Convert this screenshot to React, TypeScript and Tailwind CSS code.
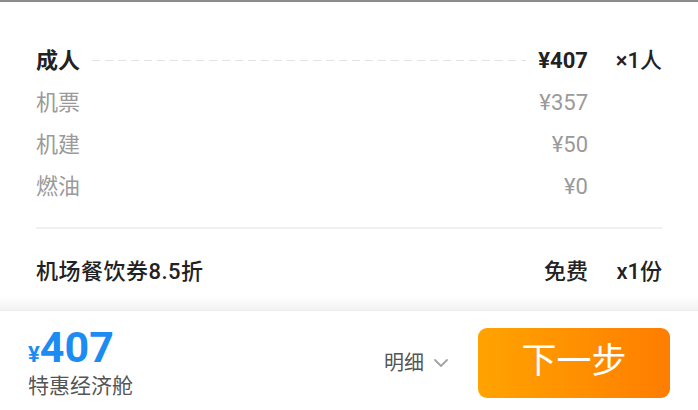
const font = { fontFamily: '"Roboto", "Noto Sans CJK SC", sans-serif' }

function FeeRow({ label, price }: { label: string; price: string }) {
  return (
    <div className="flex h-[42px] items-center text-[22px] text-[#9a9a9a]">
      <span>{label}</span>
      <div className="flex-1" />
      <span>{price}</span>
      <span className="w-[74px]" />
    </div>
  )
}

export default function App() {
  return (
    <div className="flex h-[410px] w-[698px] flex-col overflow-hidden bg-white" style={font}>
      <div className="h-[2px] bg-[#8c8c8c]" />

      <div className="px-[36px] pt-[37px]">
        <div className="flex h-[42px] items-center text-[22px] font-bold text-[#222]">
          <span>成人</span>
          <div className="mx-[12px] h-px flex-1 bg-[repeating-linear-gradient(to_right,#e3e3e3_0_8px,transparent_8px_13px)]" />
          <span>¥407</span>
          <span className="ml-[26px] w-[48px] text-right font-medium">×1人</span>
        </div>
        <FeeRow label="机票" price="¥357" />
        <FeeRow label="机建" price="¥50" />
        <FeeRow label="燃油" price="¥0" />

        <div className="mt-[20px] h-[2px] bg-[#f0f0f0]" />

        <div className="mt-[21px] flex h-[42px] items-center text-[22px] font-medium text-[#222]">
          <span className="tracking-[0.5px]">机场餐饮券8.5折</span>
          <div className="flex-1" />
          <span>免费</span>
          <span className="ml-[26px] w-[48px] text-right">x1份</span>
        </div>
      </div>

      <div className="mt-auto h-[14px] bg-gradient-to-b from-white to-[#f2f2f2]" />
      <div className="h-px bg-[#ececec]" />

      <div className="flex h-[99px] items-center bg-white pl-[28px] pr-[28px]">
        <div className="mt-[4px] flex flex-col">
          <div className="flex items-baseline font-bold text-[#1c8cf2]">
            <span className="text-[22px]">¥</span>
            <span className="text-[43px] leading-[44px]">407</span>
          </div>
          <span className="text-[21px] leading-[30px] text-[#555]">特惠经济舱</span>
        </div>
        <div className="flex-1" />
        <div className="mr-[28px] mt-[4px] flex items-center text-[20px] text-[#555]">
          <span>明细</span>
          <svg className="ml-[8px]" width="18" height="18" viewBox="0 0 24 24" fill="none" stroke="#a5a5a5" strokeWidth="2.5" strokeLinecap="round" strokeLinejoin="round">
            <path d="M4 8l8 8 8-8" />
          </svg>
        </div>
        <button className="mt-[4px] flex h-[70px] w-[192px] items-center justify-center rounded-[9px] bg-gradient-to-r from-[#ffa300] to-[#ff7d00] text-[35px] text-white">
          下一步
        </button>
      </div>
    </div>
  )
}
